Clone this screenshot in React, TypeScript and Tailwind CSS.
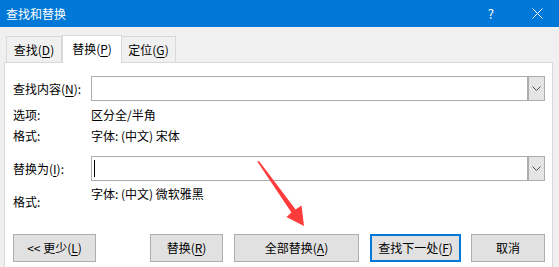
import React from "react";

function Chevron() {
  return (
    <svg width="9" height="5" viewBox="0 0 9 5" className="text-[#505050]">
      <path d="M0.5 0.5 L4.5 4.5 L8.5 0.5" fill="none" stroke="currentColor" strokeWidth="1" />
    </svg>
  );
}

function Combo({ cursor }: { cursor?: boolean }) {
  return (
    <div className="flex h-[25px] w-[454px] border border-[#acacac] bg-white">
      <div className="flex flex-1 items-center pl-[2px]">
        {cursor && <div className="h-[17px] w-px bg-black" />}
      </div>
      <div className="flex w-[17px] items-center justify-center border-l-2 border-[#acacac] bg-[#e5e5e5]">
        <Chevron />
      </div>
    </div>
  );
}

function Btn({ children, w, primary }: { children: React.ReactNode; w: string; primary?: boolean }) {
  return (
    <div
      className={`flex h-[28px] items-center justify-center bg-[#e1e1e1] ${w} ${
        primary ? "border-2 border-[#0078d7]" : "border border-[#adadad]"
      }`}
    >
      {children}
    </div>
  );
}

export default function App() {
  return (
    <div
      className="relative h-[267px] w-[559px] overflow-hidden bg-[#f0f0f0] text-[12px] leading-none text-black"
      style={{ fontFamily: '"Microsoft YaHei UI", "Noto Sans CJK SC", "Noto Sans", sans-serif' }}
    >
      {/* Title bar */}
      <div className="flex h-[27px] items-center bg-[#0078d7] pl-[6px] text-white">
        <span className="text-[12px]">查找和替换</span>
        <span className="ml-auto mr-[38px] text-[13px]">?</span>
        <svg width="11" height="11" viewBox="0 0 11 11" className="mr-[16px]">
          <path d="M0.5 0.5 L10.5 10.5 M10.5 0.5 L0.5 10.5" stroke="white" strokeWidth="1" />
        </svg>
      </div>

      {/* Tabs */}
      <div className="mt-[8px] flex items-end pl-[6px]">
        <div className="flex h-[26px] w-[56px] items-center justify-center border border-b-0 border-[#d9d9d9] bg-[#f0f0f0]">
          查找(<u className="underline-offset-2">D</u>)
        </div>
        <div className="relative z-10 -mb-px flex h-[28px] w-[60px] items-center justify-center border border-b-0 border-[#d9d9d9] bg-white pb-[2px]">
          替换(<u className="underline-offset-2">P</u>)
        </div>
        <div className="flex h-[26px] w-[54px] items-center justify-center border border-b-0 border-l-0 border-[#d9d9d9] bg-[#f0f0f0]">
          定位(<u className="underline-offset-2">G</u>)
        </div>
      </div>

      {/* Panel */}
      <div className="ml-[4px] h-[220px] w-[549px] border border-[#d9d9d9] bg-white pl-[8px] pt-[13px]">
        <div className="flex items-center">
          <div className="w-[78px]">
            查找内容(<u className="underline-offset-2">N</u>):
          </div>
          <Combo />
        </div>
        <div className="mt-[7px] flex h-[14px] items-center">
          <div className="w-[78px]">选项:</div>
          <div>区分全/半角</div>
        </div>
        <div className="mt-[7px] flex h-[14px] items-center">
          <div className="w-[78px]">格式:</div>
          <div>字体: (中文) 宋体</div>
        </div>
        <div className="mt-[13px] flex items-center">
          <div className="w-[78px]">
            替换为(<u className="underline-offset-2">I</u>):
          </div>
          <Combo cursor />
        </div>
        <div className="mt-[7px] flex items-start">
          <div className="mt-[8px] w-[78px]">格式:</div>
          <div>字体: (中文) 微软雅黑</div>
        </div>

        {/* Buttons */}
        <div className="mt-[26px] flex">
          <Btn w="w-[83px]">
            &lt;&lt; 更少(<u className="underline-offset-2">L</u>)
          </Btn>
          <div className="ml-[54px]">
            <Btn w="w-[73px]">
              替换(<u className="underline-offset-2">R</u>)
            </Btn>
          </div>
          <div className="ml-[11px]">
            <Btn w="w-[125px]">
              全部替换(<u className="underline-offset-2">A</u>)
            </Btn>
          </div>
          <div className="ml-[11px]">
            <Btn w="w-[91px]" primary>
              查找下一处(<u className="underline-offset-2">F</u>)
            </Btn>
          </div>
          <div className="ml-[10px]">
            <Btn w="w-[74px]">取消</Btn>
          </div>
        </div>
      </div>

      {/* Red annotation arrow */}
      <svg className="absolute left-0 top-0" width="559" height="267" viewBox="0 0 559 267">
        <polygon
          points="257.3,161.6 259,160.9 295.6,209.6 301.5,205.5 304,226 286.5,217 291.4,212.6"
          fill="#ff3b3b"
        />
      </svg>
    </div>
  );
}
